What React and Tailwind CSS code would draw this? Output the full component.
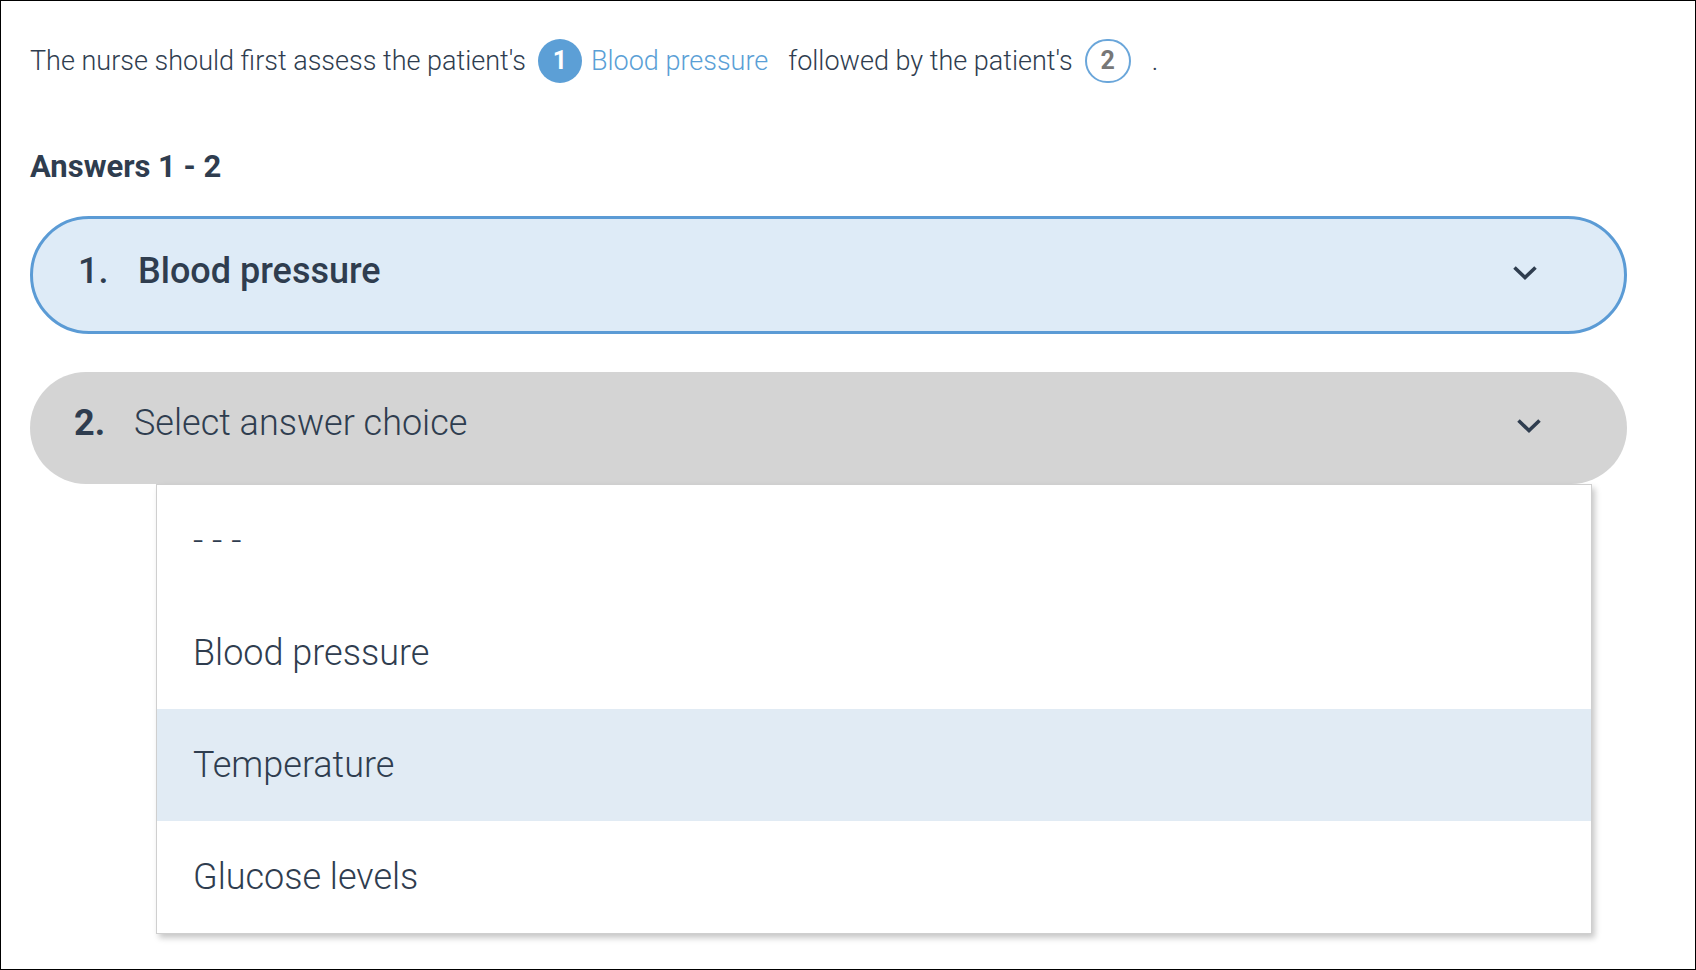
import React from "react";

function Chevron() {
  return (
    <svg width="26" height="16" viewBox="0 0 26 16" fill="none">
      <path d="M2.5 2.5 L13 12.5 L23.5 2.5" stroke="#2f3d4f" strokeWidth="3.6" strokeLinecap="butt" strokeLinejoin="miter" />
    </svg>
  );
}

export default function App() {
  const items = ["- - -", "Blood pressure", "Temperature", "Glucose levels"];
  return (
    <div className="w-[1696px] h-[970px] box-border border border-black bg-white text-[#2f3d4f] pl-[29px] pt-[37px] overflow-hidden font-[family-name:Roboto,sans-serif]">
      <div className="flex items-center h-[46px] text-[27px] font-light">
        <span>The nurse should first assess the patient's</span>
        <span className="ml-[12px] w-[44px] h-[44px] rounded-full bg-[#5c9fd6] text-white font-bold flex items-center justify-center text-[25px]">
          1
        </span>
        <span className="ml-[9px] text-[#5a9fd6]">Blood pressure</span>
        <span className="ml-[20px]">followed by the patient's</span>
        <span className="ml-[12px] w-[46px] h-[44px] box-border rounded-full border-2 border-[#6aa6da] text-[#777777] font-bold flex items-center justify-center text-[25px]">
          2
        </span>
        <span className="ml-[21px]">.</span>
      </div>

      <div className="mt-[67px] text-[31px] leading-[31px] font-bold">Answers 1 - 2</div>

      <div className="mt-[34px] w-[1597px] h-[118px] box-border rounded-full border-[3px] border-[#5b9bd5] bg-[#deebf7] flex items-center pl-[45px] pr-[86px] text-[36px]">
        <span className="w-[60px] font-medium pb-[8px]">1.</span>
        <span className="font-medium pb-[8px]">Blood pressure</span>
        <span className="ml-auto pb-[4px]">
          <Chevron />
        </span>
      </div>

      <div className="relative mt-[38px] w-[1597px]">
        <div className="h-[112px] rounded-full bg-[#d4d4d4] flex items-center pl-[44px] pr-[85px] text-[36px]">
          <span className="w-[60px] font-bold pb-[10px]">2.</span>
          <span className="font-light pb-[10px]">Select answer choice</span>
          <span className="ml-auto pb-[4px]">
            <Chevron />
          </span>
        </div>
        <div className="absolute left-[126px] top-[112px] w-[1436px] box-border border border-[#cfcfcf] bg-white shadow-[3px_4px_6px_rgba(0,0,0,0.22)]">
          {items.map((t, i) => (
            <div
              key={t}
              className={
                i === 2
                  ? "h-[112px] flex items-center pl-[36px] text-[36px] font-light bg-[#e1ebf4]"
                  : "h-[112px] flex items-center pl-[36px] text-[36px] font-light"
              }
            >
              {t}
            </div>
          ))}
        </div>
      </div>
    </div>
  );
}
